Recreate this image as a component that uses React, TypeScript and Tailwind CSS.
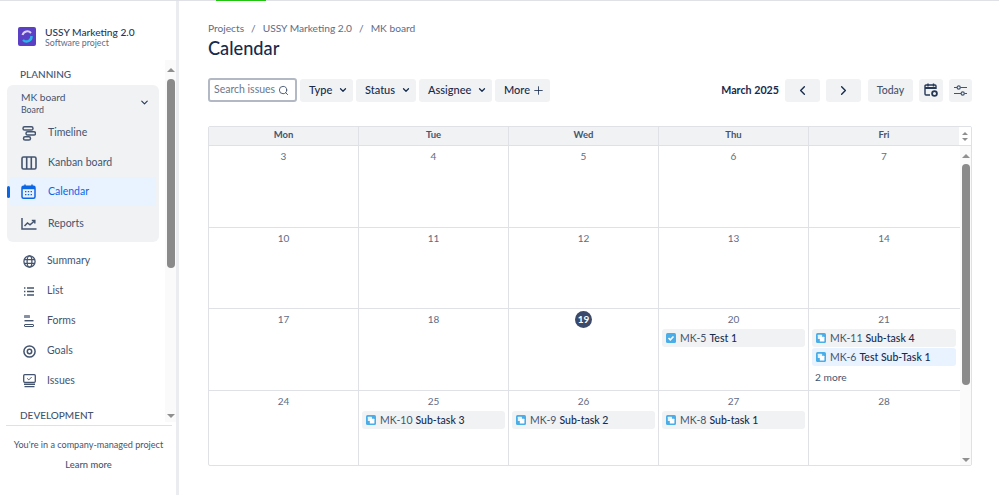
import { ChevronDown, ChevronLeft, ChevronRight, Plus, Search } from "lucide-react"

function Logo() {
  return (
    <svg width="18" height="19" viewBox="0 0 18 19">
      <rect width="18" height="19" rx="2" fill="#5b3fc4" />
      <path d="M4.5 8 A5 5 0 0 1 13 6" fill="none" stroke="#d9d2f5" strokeWidth="2" />
      <path d="M13.5 9 A5 5 0 0 1 5 13" fill="none" stroke="#29b6e8" strokeWidth="2.4" />
    </svg>
  )
}

function NavIcon({ name, color = "#44546f" }: { name: string; color?: string }) {
  const p = { fill: "none", stroke: color, strokeWidth: 1.5 }
  if (name === "timeline")
    return (
      <svg width="14" height="15" viewBox="0 0 14 15" {...p}>
        <rect x="1" y="0.8" width="10" height="3.2" rx="1.6" />
        <rect x="4" y="5.8" width="9.5" height="3.2" rx="1.6" />
        <rect x="1.5" y="10.8" width="7" height="3.2" rx="1.6" />
      </svg>
    )
  if (name === "kanban")
    return (
      <svg width="16" height="14" viewBox="0 0 16 14" {...p} strokeWidth="1.6">
        <rect x="1" y="1" width="14" height="12" rx="1.5" />
        <path d="M5.7 1v12M10.3 1v12" />
      </svg>
    )
  if (name === "calendar")
    return (
      <svg width="15" height="15" viewBox="0 0 15 15">
        <rect x="1" y="2.2" width="13" height="12" rx="1.5" fill="none" stroke={color} strokeWidth="1.5" />
        <rect x="1" y="2.2" width="13" height="3" fill={color} />
        <path d="M4 0.5v3M11 0.5v3" stroke={color} strokeWidth="1.5" />
        <path d="M4 7.6h1.4M6.8 7.6h1.4M9.6 7.6h1.4M4 10.6h1.4M6.8 10.6h1.4M9.6 10.6h1.4" stroke={color} strokeWidth="1.4" />
      </svg>
    )
  if (name === "reports")
    return (
      <svg width="16" height="12" viewBox="0 0 16 12" {...p}>
        <path d="M1 0v11h14.5" />
        <path d="M3.5 8l3-3 2.5 1.8L13.5 3" />
        <path d="M10.8 2.6h3v3" />
      </svg>
    )
  if (name === "summary")
    return (
      <svg width="13" height="13" viewBox="0 0 13 13" {...p} strokeWidth="1.3">
        <circle cx="6.5" cy="6.5" r="5.6" />
        <ellipse cx="6.5" cy="6.5" rx="2.4" ry="5.6" />
        <path d="M1 4.6h11M1 8.4h11" />
      </svg>
    )
  if (name === "list")
    return (
      <svg width="10" height="9" viewBox="0 0 10 9" fill="none" stroke={color} strokeWidth="1.3">
        <path d="M0 1h1.4M3 1h7M0 4.5h1.4M3 4.5h7M0 8h1.4M3 8h7" />
      </svg>
    )
  if (name === "forms")
    return (
      <svg width="10" height="12" viewBox="0 0 10 12">
        <rect x="0" y="0" width="6" height="3" rx="0.6" fill="#8590a2" />
        <rect x="0.5" y="5" width="9" height="1.4" fill={color} />
        <rect x="0.5" y="9.5" width="9" height="2" rx="0.5" fill="none" stroke={color} strokeWidth="1" />
      </svg>
    )
  if (name === "goals")
    return (
      <svg width="13" height="13" viewBox="0 0 13 13" fill="none" stroke={color}>
        <circle cx="6.5" cy="6.5" r="5.6" strokeWidth="1.5" />
        <circle cx="6.5" cy="6.5" r="2.2" strokeWidth="1.5" />
      </svg>
    )
  return (
    <svg width="13" height="14" viewBox="0 0 13 14" fill="none" stroke={color}>
      <rect x="0.7" y="0.7" width="11.6" height="7.6" rx="1" strokeWidth="1.3" />
      <path d="M4.2 4.4l1.6 1.5 2.8-2.8" strokeWidth="1" />
      <path d="M1 10.2h11M1.5 12.6h10" strokeWidth="1.4" />
    </svg>
  )
}

function NavItem({ name, label, iconBox = "w-[23px]", gap = "ml-[8px]" }: { name: string; label: string; iconBox?: string; gap?: string }) {
  return (
    <div className="flex items-center h-[30px] pt-[2px] text-[10.5px] text-[#44546f]">
      <div className={`flex justify-center ${iconBox}`}>
        <NavIcon name={name} />
      </div>
      <span className={gap}>{label}</span>
    </div>
  )
}

function Sidebar() {
  return (
    <div className="flex flex-col w-[179px] shrink-0 h-full border-r-[3px] border-[#ebecf0]">
      <div className="flex items-start h-[59px] pl-[18px] pt-[26px]">
        <Logo />
        <div className="ml-[9px] -mt-[1px]">
          <div className="text-[10.2px] leading-[12px] font-medium text-[#253858]">USSY Marketing 2.0</div>
          <div className="text-[8.8px] leading-[10px] text-[#5e6c84]">Software project</div>
        </div>
      </div>
      <div className="flex h-[362px]">
        <div className="w-[166px] overflow-hidden">
          <div className="pl-[20px] pt-[8px] h-[25px] text-[10px] font-medium leading-[12px] text-[#44546f]">PLANNING</div>
          <div className="ml-[7px] w-[152px] h-[157px] rounded-[6px] bg-[#f1f2f4] pt-[4px]">
            <div className="flex items-center h-[27px] pl-[14px] pr-[9px] text-[#44546f]">
              <div className="flex-1">
                <div className="text-[10.2px] leading-[14px]">MK board</div>
                <div className="text-[8.8px] leading-[12px]">Board</div>
              </div>
              <ChevronDown size={11} strokeWidth={2.5} color="#253858" />
            </div>
            <div className="pl-[10px] mt-px">
              <NavItem name="timeline" label="Timeline" />
            </div>
            <div className="pl-[10px]">
              <NavItem name="kanban" label="Kanban board" />
            </div>
            <div className="relative ml-[3px] w-[146px] h-[29px] flex items-center pl-[7px] rounded-[3px] bg-[#e9f2ff] text-[10.5px] text-[#0c66e4]">
              <div className="absolute -left-[3px] top-[9px] w-[3px] h-[12px] rounded-full bg-[#0c66e4]" />
              <div className="flex justify-center w-[23px]">
                <NavIcon name="calendar" color="#0c66e4" />
              </div>
              <span className="ml-[8px]">Calendar</span>
            </div>
            <div className="pl-[10px] mt-[2px]">
              <NavItem name="reports" label="Reports" />
            </div>
          </div>
          <div className="pl-[18px] mt-[3px]">
            <NavItem name="summary" label="Summary" iconBox="w-[22px]" gap="ml-[7px]" />
            <NavItem name="list" label="List" iconBox="w-[22px]" gap="ml-[7px]" />
            <NavItem name="forms" label="Forms" iconBox="w-[22px]" gap="ml-[7px]" />
            <NavItem name="goals" label="Goals" iconBox="w-[22px]" gap="ml-[7px]" />
            <NavItem name="issues" label="Issues" iconBox="w-[22px]" gap="ml-[7px]" />
          </div>
          <div className="pl-[20px] mt-[14px] text-[10px] font-medium leading-[12px] text-[#44546f]">DEVELOPMENT</div>
        </div>
        <Scrollbar thumbTop="mt-[7px]" thumbH="h-[189px]" />
      </div>
      <div className="mx-[6px] mt-[3px] border-t border-[#dfe1e6] w-[166px]" />
      <div className="text-center w-[177px] pt-[13px] text-[9.1px] leading-[12px] text-[#44546f]">You're in a company-managed project</div>
      <div className="text-center w-[177px] mt-[8px] text-[9.4px] font-medium leading-[12px] text-[#44546f]">Learn more</div>
    </div>
  )
}

function Scrollbar({ thumbTop, thumbH }: { thumbTop: string; thumbH: string }) {
  return (
    <div className="flex flex-col items-center w-[11px] bg-[#fafafa] pt-[8px] pb-[4px]">
      <div className="w-0 h-0 border-x-[4px] border-x-transparent border-b-[4px] border-b-[#8f8f8f]" />
      <div className={`${thumbTop} ${thumbH} w-[8px] rounded-full bg-[#8a8a8a]`} />
      <div className="flex-1" />
      <div className="w-0 h-0 border-x-[4px] border-x-transparent border-t-[4px] border-t-[#8f8f8f]" />
    </div>
  )
}

function Filter({ label, width }: { label: string; width: string }) {
  return (
    <div className={`flex items-center justify-between h-[23px] ${width} pl-[9px] pr-[5px] rounded-[3px] bg-[#f1f2f4] text-[11px] font-medium text-[#172b4d]`}>
      {label}
      {label === "More" ? <Plus size={13} strokeWidth={1.5} /> : <ChevronDown size={10} strokeWidth={3} />}
    </div>
  )
}

function SquareButton({ width, children }: { width: string; children: React.ReactNode }) {
  return <div className={`flex items-center justify-center h-[23px] ${width} rounded-[3px] bg-[#f1f2f4] text-[#172b4d]`}>{children}</div>
}

function IssueIcon({ type }: { type: string }) {
  return (
    <svg width="10" height="10" viewBox="0 0 10 10" className="shrink-0">
      <rect width="10" height="10" rx="1.5" fill="#4bade8" />
      {type === "task" ? (
        <path d="M2.5 5l1.8 1.8 3.2-3.4" fill="none" stroke="#fff" strokeWidth="1.5" />
      ) : (
        <>
          <rect x="1.8" y="1.8" width="4.2" height="4.2" rx="0.5" fill="#e4f3fc" />
          <rect x="3.8" y="3.8" width="4.6" height="4.6" rx="0.5" fill="#fff" />
        </>
      )}
    </svg>
  )
}

function Issue({ id, title, type = "sub", selected }: { id: string; title: string; type?: string; selected?: boolean }) {
  return (
    <div className={`flex items-center h-[18px] mx-[3px] pl-[4px] rounded-[3px] text-[10.5px] whitespace-nowrap ${selected ? "bg-[#e9f2ff]" : "bg-[#f1f2f4]"}`}>
      <IssueIcon type={type} />
      <div className="flex pt-[2px]">
        <span className="ml-[4px] text-[#44546f]">{id}</span>
        <span className="ml-[3px] font-medium text-[#172b4d]">{title}</span>
      </div>
    </div>
  )
}

const weeks = [
  { h: "h-[82px]", days: [{ d: 3 }, { d: 4 }, { d: 5 }, { d: 6 }, { d: 7 }] },
  { h: "h-[81px]", days: [{ d: 10 }, { d: 11 }, { d: 12 }, { d: 13 }, { d: 14 }] },
  {
    h: "h-[82px]",
    days: [
      { d: 17 },
      { d: 18 },
      { d: 19 },
      { d: 20, issues: [{ id: "MK-5", title: "Test 1", type: "task" }] },
      {
        d: 21,
        issues: [
          { id: "MK-11", title: "Sub-task 4" },
          { id: "MK-6", title: "Test Sub-Task 1", selected: true },
        ],
        more: "2 more",
      },
    ],
  },
  {
    h: "h-[75px]",
    days: [
      { d: 24 },
      { d: 25, issues: [{ id: "MK-10", title: "Sub-task 3" }] },
      { d: 26, issues: [{ id: "MK-9", title: "Sub-task 2" }] },
      { d: 27, issues: [{ id: "MK-8", title: "Sub-task 1" }] },
      { d: 28 },
    ],
  },
]

function Calendar() {
  return (
    <div className="mt-[24px] w-[764px] h-[340px] border border-[#dfe1e6] rounded-[2px] overflow-hidden">
      <div className="flex h-[19px] border-b border-[#dfe1e6] bg-[#f1f2f4]">
        {["Mon", "Tue", "Wed", "Thu", "Fri"].map((day, i) => (
          <div
            key={day}
            className={`flex items-center justify-center w-[150px] pb-px text-[9.5px] font-bold text-[#44546f] ${i < 4 ? "border-r border-[#dfe1e6]" : ""}`}
          >
            {day}
          </div>
        ))}
        <div className="flex flex-1 flex-col items-center justify-center gap-[3px] bg-white">
          <div className="w-0 h-0 border-x-[3px] border-x-transparent border-b-[3px] border-b-[#8f8f8f]" />
          <div className="w-0 h-0 border-x-[3px] border-x-transparent border-t-[3px] border-t-[#8f8f8f]" />
        </div>
      </div>
      <div className="flex h-[320px]">
        <div className="w-[751px]">
          {weeks.map((week, w) => (
            <div key={w} className={`flex ${week.h} ${w < 3 ? "border-b border-[#dfe1e6]" : ""}`}>
              {week.days.map((day: any, i) => (
                <div key={day.d} className={`w-[150px] ${i < 4 ? "border-r border-[#dfe1e6]" : ""}`}>
                  <div className="flex justify-center h-[19px] items-center mt-px">
                    {day.d === 19 ? (
                      <div className="flex items-center justify-center w-[17px] h-[17px] rounded-full bg-[#3b4a6b] text-[10px] font-bold text-white">19</div>
                    ) : (
                      <span className="text-[10px] text-[#5e6c84]">{day.d}</span>
                    )}
                  </div>
                  <div className="flex flex-col gap-[1px]">
                    {day.issues?.map((issue: any) => (
                      <Issue key={issue.id} {...issue} />
                    ))}
                  </div>
                  {day.more && <div className="pl-[6px] mt-[3px] text-[10.2px] leading-[16px] text-[#44546f]">{day.more}</div>}
                </div>
              ))}
            </div>
          ))}
        </div>
        <Scrollbar thumbTop="mt-[6px]" thumbH="h-[221px]" />
      </div>
    </div>
  )
}

export default function App() {
  return (
    <div className="flex flex-col w-[999px] h-[495px] overflow-hidden bg-white font-['Lato',sans-serif]">
      <div className="h-px shrink-0 bg-[#dfe1e6]">
        <div className="ml-[216px] w-[50px] h-px bg-[#22c511]" />
      </div>
      <div className="flex flex-1 min-h-0">
        <Sidebar />
        <div className="flex-1 pl-[29px] pt-[21px]">
          <div className="flex items-center h-[14px] text-[10.2px] text-[#5e6c84]">
            <span>Projects</span>
            <span className="mx-[7px]">/</span>
            <span>USSY Marketing 2.0</span>
            <span className="mx-[7px]">/</span>
            <span>MK board</span>
          </div>
          <div className="text-[18.2px] leading-[24px] font-medium text-[#172b4d]">Calendar</div>
          <div className="flex items-center w-[764px] mt-[18px]">
            <div className="flex items-center justify-between whitespace-nowrap w-[89px] h-[24px] pl-[4px] pr-[6px] rounded-[3px] border-2 border-[#b3b9c4] text-[10.5px] text-[#6b778c]">
              Search issues
              <Search size={11} strokeWidth={2} color="#44546f" />
            </div>
            <div className="flex gap-[3px] ml-[3px]">
              <Filter label="Type" width="w-[53px]" />
              <Filter label="Status" width="w-[60px]" />
              <Filter label="Assignee" width="w-[73px]" />
              <Filter label="More" width="w-[55px]" />
            </div>
            <div className="flex-1" />
            <span className="text-[10.7px] font-bold text-[#172b4d] mr-[6px]">March 2025</span>
            <SquareButton width="w-[35px]">
              <ChevronLeft size={15} strokeWidth={2.2} />
            </SquareButton>
            <div className="w-[6px]" />
            <SquareButton width="w-[35px]">
              <ChevronRight size={15} strokeWidth={2.2} />
            </SquareButton>
            <div className="w-[7px]" />
            <SquareButton width="w-[45px]">
              <span className="pt-[2px] text-[10.5px] text-[#44546f] font-medium">Today</span>
            </SquareButton>
            <div className="w-[6px]" />
            <SquareButton width="w-[24px]">
              <svg width="14" height="14" viewBox="0 0 14 14" fill="none" stroke="#253858" strokeWidth="1.4">
                <path d="M6 12H2a1 1 0 0 1-1-1V3a1 1 0 0 1 1-1h9a1 1 0 0 1 1 1v3" />
                <path d="M1 5h11" strokeWidth="2" />
                <path d="M4 0.5v3M9.5 0.5v3" />
                <circle cx="10.5" cy="10.5" r="2.4" strokeWidth="1.8" />
              </svg>
            </SquareButton>
            <div className="w-[6px]" />
            <SquareButton width="w-[23px]">
              <svg width="13" height="11" viewBox="0 0 13 11" fill="none" stroke="#44546f" strokeWidth="1.2">
                <path d="M0 2.5h3M6.5 2.5h6.5M0 8.5h7M10.5 8.5h2.5" />
                <circle cx="4.7" cy="2.5" r="1.6" />
                <circle cx="8.7" cy="8.5" r="1.6" />
              </svg>
            </SquareButton>
          </div>
          <Calendar />
        </div>
      </div>
    </div>
  )
}
